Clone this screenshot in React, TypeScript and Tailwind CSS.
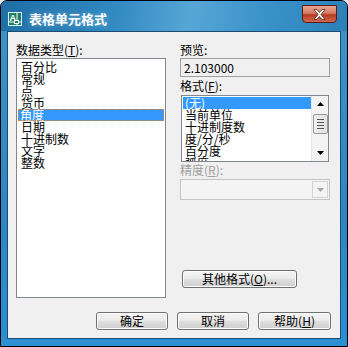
const typeItems = ["百分比", "常规", "点", "货币", "角度", "日期", "十进制数", "文字", "整数"];
const formatItems = ["(无)", "当前单位", "十进制度数", "度/分/秒", "百分度", "弧度"];

const Btn = ({ w, children }: { w: string; children: React.ReactNode }) => (
  <div
    className={`${w} h-[18px] flex items-center justify-center rounded-[3px] border border-[#707070] bg-[linear-gradient(180deg,#f4f4f4_0%,#ebebeb_45%,#dddddd_55%,#cfcfcf_100%)] shadow-[inset_0_0_0_1px_#fcfcfc] text-black leading-[12px]`}
  >
    {children}
  </div>
);

const Arrow = ({ up, color = "#000" }: { up?: boolean; color?: string }) => (
  <svg width="7" height="4" viewBox="0 0 7 4">
    <path d={up ? "M0 4 L3.5 0 L7 4 Z" : "M0 0 L7 0 L3.5 4 Z"} fill={color} />
  </svg>
);

export default function App() {
  return (
    <div className="w-[348px] h-[347px] bg-[#dfe6ee] font-['Noto_Sans_CJK_SC','Noto_Sans',sans-serif] text-[12px] text-black">
      <div className="w-full h-full border border-black rounded-t-[7px] bg-[linear-gradient(180deg,#2a7fb9_0%,#3b92c9_10%,#2e86c3_60%,#2b8fd2_100%)] flex flex-col px-[6px] pb-[6px] overflow-hidden">
        {/* TITLE BAR */}
        <div className="h-[30px] shrink-0 flex items-start relative bg-[linear-gradient(100deg,#1f6ea6_0%,#2d86be_30%,#57a6d6_55%,#3b93c9_75%,#2c80ba_100%)] -mx-[6px] px-[7px]">
          <svg width="14" height="14" viewBox="0 0 14 14" className="mt-[11px]">
            <rect x="0.5" y="0.5" width="13" height="13" fill="#1d7f6a" stroke="#d8f0e8" />
            <text x="1.5" y="9" fontSize="9" fontWeight="bold" fill="#fff" fontFamily="Liberation Sans">A</text>
            <path d="M9 1 V13 M1 10 H13" stroke="#fff" strokeWidth="1" />
            <rect x="6.5" y="8.5" width="4" height="3" fill="#1d7f6a" stroke="#fff" />
          </svg>
          <span className="ml-[7px] mt-[10px] text-[13px] leading-[15px] font-bold text-white tracking-[0px] [text-shadow:0_0_6px_rgba(255,255,255,0.35)]">
            表格单元格式
          </span>
          <div className="absolute right-[10px] top-[4px] w-[35px] h-[18px] rounded-b-[4px] border border-[#5a1c14] bg-[linear-gradient(180deg,#e8a593_0%,#d47a62_45%,#b83a22_55%,#cf6a4e_100%)] flex items-center justify-center">
            <svg width="13" height="11" viewBox="0 0 13 11">
              <path d="M1 0.5 H4 L6.5 3.5 L9 0.5 H12 L8 5.5 L12 10.5 H9 L6.5 7.5 L4 10.5 H1 L5 5.5 Z" fill="#fff" stroke="#4a2018" strokeWidth="0.8" />
            </svg>
          </div>
        </div>

        {/* CLIENT AREA */}
        <div className="h-[308px] shrink-0 bg-[#f0f0f0] border border-[#1b4a73] flex flex-col">
          <div className="flex pl-[8px] pt-[12px] gap-[14px] h-[279px]">
            {/* LEFT */}
            <div className="w-[150px] flex flex-col">
              <div className="leading-[12px] h-[12px]">
                数据类型(<span className="underline">T</span>):
              </div>
              <div className="mt-[2px] h-[240px] border border-[#828790] bg-white pt-[2px] px-[1px]">
                {typeItems.map((t) => (
                  <div
                    key={t}
                    className={
                      t === "角度"
                        ? "h-[12px] leading-[12px] pl-[2px] bg-[#3399ff] text-white outline-1 outline-dotted outline-[#f08020] -outline-offset-1"
                        : "h-[12px] leading-[12px] pl-[3px]"
                    }
                  >
                    {t}
                  </div>
                ))}
              </div>
            </div>

            {/* RIGHT */}
            <div className="w-[150px] flex flex-col">
              <div className="leading-[12px] h-[12px]">预览:</div>
              <div className="mt-[2px] h-[19px] border border-[#a0a0a0] bg-[#f0f0f0] flex items-center pl-[3px] leading-[12px]">
                2.103000
              </div>
              <div className="mt-[3px] leading-[12px] h-[12px]">
                格式(<span className="underline">F</span>):
              </div>
              <div className="mt-[3px] ml-[1px] w-[148px] h-[67px] border border-[#828790] bg-white flex">
                <div className="flex-1 pt-[1px] pl-[1px] overflow-hidden">
                  {formatItems.map((t) => (
                    <div
                      key={t}
                      className={
                        t === "(无)"
                          ? "h-[12px] leading-[12px] pl-[2px] bg-[#3399ff] text-white"
                          : "h-[12px] leading-[12px] pl-[2px]"
                      }
                    >
                      {t}
                    </div>
                  ))}
                </div>
                <div className="w-[17px] bg-[#f3f3f3] flex flex-col items-center border-l border-[#e8e8e8]">
                  <div className="h-[16px] flex items-center justify-center">
                    <Arrow up />
                  </div>
                  <div className="mt-[2px] w-[15px] h-[20px] rounded-[2px] border border-[#979797] bg-[linear-gradient(90deg,#f2f2f2,#e0e0e0)] flex flex-col items-center justify-center gap-[2px]">
                    <div className="w-[7px] h-[1px] bg-[#555]" />
                    <div className="w-[7px] h-[1px] bg-[#555]" />
                    <div className="w-[7px] h-[1px] bg-[#555]" />
                    <div className="w-[7px] h-[1px] bg-[#555]" />
                  </div>
                  <div className="flex-1" />
                  <div className="h-[16px] flex items-center justify-center">
                    <Arrow />
                  </div>
                </div>
              </div>
              <div className="mt-[2px] leading-[12px] h-[12px] text-[#a0a0a0]">
                精度(<span className="underline">R</span>):
              </div>
              <div className="mt-[3px] h-[21px] border border-[#c4c4c4] bg-[#f4f4f4] flex justify-end p-[1px]">
                <div className="w-[16px] h-[17px] border border-[#d4d4d4] bg-[#f4f4f4] flex items-center justify-center">
                  <Arrow color="#a8a8a8" />
                </div>
              </div>
              <div className="mt-[70px] ml-[2px]">
                <Btn w="w-[115px]">
                  其他格式(<span className="underline">O</span>)...
                </Btn>
              </div>
            </div>
          </div>

          {/* BOTTOM BUTTONS */}
          <div className="flex pl-[88px] gap-[9px] mt-[1px]">
            <Btn w="w-[72px]">确定</Btn>
            <Btn w="w-[72px]">取消</Btn>
            <Btn w="w-[73px]">
              帮助(<span className="underline">H</span>)
            </Btn>
          </div>
        </div>
      </div>
    </div>
  );
}
